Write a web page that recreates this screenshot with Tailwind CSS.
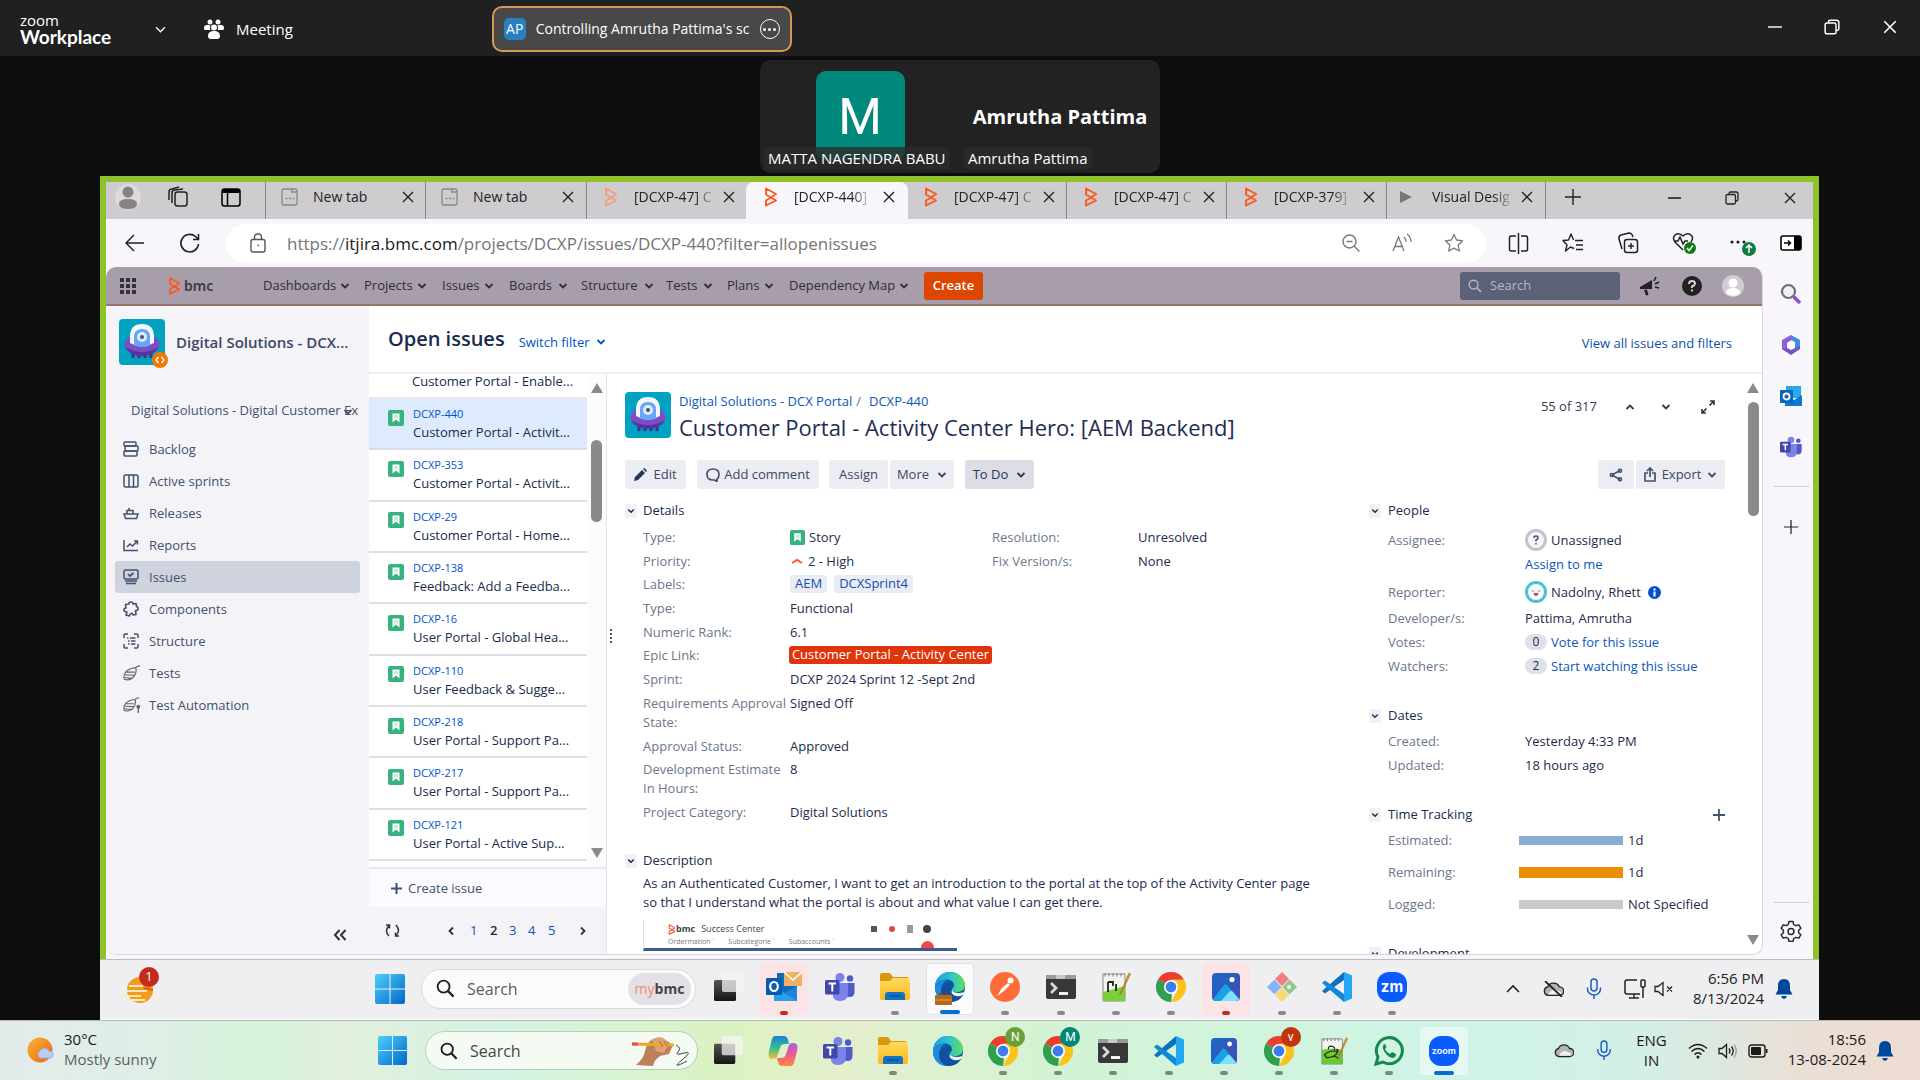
<!DOCTYPE html>
<html lang="en">
<head>
<meta charset="utf-8">
<title>Zoom Workplace</title>
<script src="https://cdn.jsdelivr.net/npm/@tailwindcss/browser@4"></script>
</head>
<body class="flex h-screen flex-col overflow-hidden bg-[#0d0d0d] font-['Open_Sans','Noto_Sans',sans-serif] text-[13px] leading-[19px] text-[#172b4d]">

<svg width="0" height="0" class="absolute" aria-hidden="true">
  <defs>
    <linearGradient id="gWin" x1="0" y1="0" x2="1" y2="1"><stop offset="0" stop-color="#4fd0fb"/><stop offset="1" stop-color="#0067c9"/></linearGradient>
    <linearGradient id="gFold" x1="0" y1="0" x2="0" y2="1"><stop offset="0" stop-color="#ffd95e"/><stop offset="1" stop-color="#fbb81f"/></linearGradient>
    <linearGradient id="gEdge" x1="0" y1="0" x2="1" y2="0"><stop offset="0" stop-color="#1b9de2"/><stop offset=".5" stop-color="#2bc3d2"/><stop offset="1" stop-color="#5fe05a"/></linearGradient>
    <linearGradient id="gSun" x1="0" y1="0" x2="1" y2="1"><stop offset="0" stop-color="#f7b733"/><stop offset="1" stop-color="#ef5f17"/></linearGradient>
    <linearGradient id="gPho" x1="0" y1="0" x2="1" y2="1"><stop offset="0" stop-color="#1669c9"/><stop offset="1" stop-color="#4a49b0"/></linearGradient>
    <linearGradient id="gCop" x1="0" y1="0" x2="0" y2="1"><stop offset="0" stop-color="#1b7fe0"/><stop offset=".5" stop-color="#2fbf8d"/><stop offset="1" stop-color="#f5c02e"/></linearGradient>
    <linearGradient id="gCop2" x1="0" y1="0" x2="0" y2="1"><stop offset="0" stop-color="#a35df2"/><stop offset=".5" stop-color="#ef5a8f"/><stop offset="1" stop-color="#fb8a3c"/></linearGradient>
    <linearGradient id="gTv" x1="0" y1="0" x2="0" y2="1"><stop offset="0" stop-color="#555"/><stop offset="1" stop-color="#151515"/></linearGradient>
  </defs>
  <symbol id="chev" viewBox="0 0 10 10"><path d="M1.500 3l3.500 3.500L8.500 3" fill="none" stroke="currentColor" stroke-width="1.800"/></symbol>
  <symbol id="x" viewBox="0 0 14 14"><path d="M2 2l10 10M12 2L2 12" fill="none" stroke="currentColor" stroke-width="1.400"/></symbol>
  <symbol id="plus" viewBox="0 0 18 18"><path d="M9 1v16M1 9h16" fill="none" stroke="currentColor" stroke-width="1.400"/></symbol>
  <symbol id="restore" viewBox="0 0 14 14"><rect x="1" y="3.500" width="9.500" height="9.500" rx="1.500" fill="none" stroke="currentColor" stroke-width="1.300"/><path d="M4 3.500V2.500Q4 1 5.500 1H11q2 0 2 2v5.500q0 1.500-1.500 1.500h-1" fill="none" stroke="currentColor" stroke-width="1.300"/></symbol>
  <symbol id="bmc" viewBox="0 0 14 20"><path d="M2 1.500L12 7 7 10.500 2 7.500zM7 10.500L12 13.500 2 18.500V13.500z" fill="none" stroke="currentColor" stroke-width="1.900" stroke-linejoin="round"/></symbol>
  <symbol id="ntab" viewBox="0 0 18 18"><path d="M3 1h7l1 3h5v11q0 2-2 2H3q-2 0-2-2V3q0-2 2-2zM10 1h4q2 0 2 2v1" fill="none" stroke="currentColor" stroke-width="1.300"/><path d="M4.500 10.500h2M8 10.500h2M11.500 10.500h2" stroke="currentColor" stroke-width="1.500"/></symbol>
  <symbol id="story" viewBox="0 0 16 16"><rect width="16" height="16" rx="2" fill="#36b37e"/><path d="M4.500 3.500h7v9L8 9.500l-3.500 3z" fill="#fff"/><path d="M6 5h4v4.500L8 8l-2 1.500z" fill="#36b37e" fill-opacity=".25"/></symbol>
  <symbol id="alien" viewBox="0 0 46 46"><rect width="46" height="46" rx="4" fill="#00a3bf"/><path d="M14 33v6M32 33v6M20 36v3M26 36v3" stroke="#403294" stroke-width="3"/><ellipse cx="23" cy="25.500" rx="17.500" ry="10.500" fill="#7a4fc4"/><path d="M6 28q17 10 34 0-5 9-17 9T6 28z" fill="#5a32a3"/><path d="M11 24V18Q11 5 23 5t12 13v6q-12 7-24 0z" fill="#f4f7ff"/><path d="M15 26V18q0-8 8-8t8 8v8q-8 4-16 0z" fill="#66a8f5"/><circle cx="23" cy="18" r="5" fill="#dcebff"/><circle cx="23" cy="18" r="2" fill="#42526e"/></symbol>
  <symbol id="mag" viewBox="0 0 20 20"><circle cx="8" cy="8" r="6.300" fill="none" stroke="currentColor" stroke-width="2"/><path d="M12.500 12.500L18.500 18.500" stroke="currentColor" stroke-width="2.400"/></symbol>
  <symbol id="win" viewBox="0 0 30 30"><path d="M0 2q0-2 2-2h12.500v14.500H0zM15.500 0H28q2 0 2 2v12.500H15.500zM0 15.500h14.500V30H2q-2 0-2-2zM15.500 15.500H30V28q0 2-2 2H15.500z" fill="url(#gWin)"/></symbol>
  <symbol id="tview" viewBox="0 0 30 30"><rect x="0" y="8" width="22" height="21" rx="1.500" fill="url(#gTv)"/><rect x="8" y="0" width="22" height="20" rx="2" fill="#f4f4f4" fill-opacity=".75"/></symbol>
  <symbol id="teams" viewBox="0 0 30 30"><circle cx="15" cy="5.500" r="4.500" fill="#7b83eb"/><circle cx="25" cy="6.500" r="3.200" fill="#5059c9"/><path d="M20 11h9.500v9q0 5-5 5T20 21z" fill="#5059c9"/><path d="M8 11h15v10q0 8-8 8T8 21z" fill="#7b83eb"/><rect y="8" width="14.500" height="14.500" rx="1.500" fill="#4048a8"/><path d="M3.500 11.500h7.500M7.300 11.500v8" stroke="#fff" stroke-width="2"/></symbol>
  <symbol id="folder" viewBox="0 0 30 30"><path d="M0 3q0-2 2-2h8l3 4h15v6H0z" fill="#d79a0c"/><path d="M0 9h10l3-3h15q2 0 2 2v18q0 2-2 2H2q-2 0-2-2z" fill="url(#gFold)"/><path d="M5 28v-5q0-3 3-3h14q3 0 3 3v5z" fill="#1272c4"/><path d="M9 24h12" stroke="#0b4f91" stroke-width="1.500"/></symbol>
  <symbol id="edge" viewBox="0 0 30 30"><circle cx="15" cy="15" r="15" fill="#0c59a4"/><path d="M0 15C0 6 7 0 15 0s15 6 15 13c0 5-4 7-8 7-3 0-5-1-5-2 0-2 2-2 2-5s-3-5.500-7-5.500C6 7.500 1 11 0 15z" fill="url(#gEdge)"/><path d="M12 7.500C5 8 0 12 0 16c0 8 6 14 14 14-5-2-8-6-8-12 0-4 2-8 6-10.500z" fill="#1b8ae0"/><path d="M16 13c-3 2-4 9 4 11 4 1 7-1 8.500-2-2 5-7 8-13.500 8C10 29 6 24 7 18c.5-4 4-7 8-7 3 0 4.500 2 1 2z" fill="#124f9e"/><path d="M17 18q1 3 7 3 3 0 4.500-1l.5 2q-3 3-8 2-6-2-4-6z" fill="#eef4f0"/></symbol>
  <symbol id="chrome" viewBox="0 0 30 30"><path d="M15 15L2 7.500A15 15 0 0 1 28 7.500z" fill="#ea3e31"/><path d="M15 15L2 7.500A15 15 0 0 0 15 30z" fill="#2fa04d"/><path d="M15 15V7.500h13A15 15 0 0 1 15 30l6-11z" fill="#fbc219"/><path d="M2 7.500L9 19q2 4 7 3.500L15 30" fill="#2fa04d"/><circle cx="15" cy="15" r="7" fill="#fff"/><circle cx="15" cy="15" r="5.400" fill="#3b7ded"/></symbol>
  <symbol id="postman" viewBox="0 0 30 30"><circle cx="15" cy="15" r="15" fill="#ff6c37"/><path d="M7 24l5-8 6-5 2 2-6 6z" fill="#fff"/><circle cx="20.500" cy="8.500" r="3" fill="#fff"/></symbol>
  <symbol id="term" viewBox="0 0 30 24"><rect width="30" height="24" rx="2" fill="#383838"/><path d="M0 4V2q0-2 2-2h26q2 0 2 2v2z" fill="#9a9a9a"/><path d="M10 0h9v4h-9z" fill="#c8c8c8"/><path d="M5 8l5 5-5 5" fill="none" stroke="#d9d9d9" stroke-width="2.800"/><path d="M13 18.500h9" stroke="#fff" stroke-width="2.800"/></symbol>
  <symbol id="npp" viewBox="0 0 30 30"><path d="M2 2h22v27H2z" fill="#f3f3f0" stroke="#888"/><path d="M2 14q11-3 22 0v15H2z" fill="#6cc832"/><path d="M4 1.500v3M8 1.500v3M12 1.500v3M16 1.500v3M20 1.500v3" stroke="#777"/><path d="M5 19q6-6 14-3-3 6-12 6zM9 13q0-4 4-3t2 4M17 14q3-2 2 2M15 20l5 3" stroke="#1d2a12" stroke-width="1.300" fill="none"/><path d="M28 1l1.500 1L20 22l-1.500 1z" fill="#e7a52c" stroke="#9c5a14" stroke-width=".6"/></symbol>
  <symbol id="nppf" viewBox="0 0 30 30"><path d="M2 2h22v27H2z" fill="#f3f3f0" stroke="#888"/><path d="M2 20l22-6v15H2z" fill="#7ad03a"/><path d="M4 1.500v3M8 1.500v3M12 1.500v3M16 1.500v3M20 1.500v3" stroke="#777"/><path d="M7 10v10M7 10h5v4M15 12v7" stroke="#222" stroke-width="1.800" fill="none"/><path d="M28 1l1.500 1L20 22l-1.500 1z" fill="#e7a52c" stroke="#9c5a14" stroke-width=".6"/></symbol>
  <symbol id="photos" viewBox="0 0 28 28"><rect width="28" height="28" rx="4" fill="url(#gPho)"/><circle cx="20" cy="6.500" r="2.600" fill="#fff"/><path d="M1 26L12 12q1.500-1.500 3 0l12 14q-1 2-3 2H4q-2 0-3-2z" fill="#1aa0e6"/><path d="M9 28l8-9q2-2 4 0l6 7q-1 2-3 2z" fill="#7fe0fb"/></symbol>
  <symbol id="vsc" viewBox="0 0 30 30"><path d="M22 0l8 3.500v23L22 30z" fill="#22a7f2"/><path d="M22 0v8L3 21.500l-3-2.500z" fill="#0a71bd"/><path d="M22 30v-8L3 8.500 0 11z" fill="#1288d6"/></symbol>
  <symbol id="git" viewBox="0 0 30 30"><path d="M15 0l7 7-7 7-7-7z" fill="#f27e7e"/><path d="M7.500 7.500l7 7.500-7 7.500L0 15z" fill="#86b4f2"/><path d="M22.500 7.500L30 15l-7.500 7.500-7-7.500z" fill="#8fca8a"/><path d="M15 15.500l7 7.500-7 7-7-7z" fill="#f5da72"/><circle cx="22" cy="15" r="2" fill="#fff"/></symbol>
  <symbol id="outlook" viewBox="0 0 36 30"><rect x="11" y="1" width="20" height="20" fill="#0f6cbd"/><path d="M8 14l12 8 11-8v15H8z" fill="#28a0ea"/><path d="M31 14v15L18 21z" fill="#1a86d8"/><rect y="6" width="16" height="17" rx="1" fill="#0a5cb0"/><ellipse cx="8" cy="14.500" rx="3.800" ry="4.500" fill="none" stroke="#fff" stroke-width="2.200"/><path d="M18 0h18v14H18z" fill="#efb168"/><path d="M18 0l9 8 9-8" fill="none" stroke="#fff" stroke-width="1.500"/></symbol>
  <symbol id="mic" viewBox="0 0 16 22"><rect x="5" y="1" width="6" height="12" rx="3" fill="none" stroke="#1c5fb8" stroke-width="1.500"/><path d="M1.500 9.500v1.500a6.500 6 0 0 0 13 0V9.500M8 17v4" fill="none" stroke="#1c5fb8" stroke-width="1.500"/></symbol>
  <symbol id="bell" viewBox="0 0 18 20"><path d="M9 0q6 0 6 7v4l2.500 4.500H.5L3 11V7q0-7 6-7zM6 17h6q-1 3-3 3t-3-3z" fill="#00489c"/></symbol>
  <symbol id="cloud" viewBox="0 0 20 14"><path d="M5 13a4 4 0 0 1-.500-7.900A6 6 0 0 1 15.500 5 4 4 0 0 1 16 13z" fill="#b4b4b4" stroke="#222" stroke-width="1.300"/><path d="M5 12.300q3.500-6.300 7.500-4.300l5 2q0 2.300-2 2.300z" fill="#f0f0f0"/></symbol>
  <symbol id="star" viewBox="0 0 20 20"><path d="M10 1.500l2.600 5.500 6 .8-4.400 4.200 1.100 6L10 15.100 4.700 18l1.100-6L1.400 7.800l6-.8z" fill="none" stroke="currentColor" stroke-width="1.300" stroke-linejoin="round"/></symbol>
  <symbol id="gear" viewBox="0 0 22 22"><path d="M9 1.500h4l.7 3 2.200 1.200 2.900-.9 2 3.400-2.200 2.100v2.400l2.200 2.100-2 3.400-2.900-.9-2.200 1.200-.7 3H9l-.7-3-2.200-1.200-2.900.9-2-3.400 2.200-2.100v-2.400L1.200 8.200l2-3.400 2.900.9 2.200-1.200z" fill="none" stroke="currentColor" stroke-width="1.400" stroke-linejoin="round"/><circle cx="11" cy="11.500" r="3" fill="none" stroke="currentColor" stroke-width="1.400"/></symbol>
  <symbol id="beetle" viewBox="0 0 20 18"><path d="M19 1q-3 0-5 2Q6 4 3 8t-1.500 8Q8 18 12 13t2-10M4 8l9 0M2.500 11l10 .5M2 14l8 1" fill="none" stroke="currentColor" stroke-width="1.300"/></symbol>
</svg>

<!-- Zoom title bar -->
<header class="flex h-14 shrink-0 items-center bg-[#202020] pt-[2px] text-white">
  <div class="flex w-[140px] flex-col pl-5">
    <span class="text-[15px] leading-4">zoom</span>
    <span class="font-['Lato','Open_Sans',sans-serif] text-[19px] leading-[18px] font-bold">Workplace</span>
  </div>
  <button class="ml-3 flex h-8 w-4 items-center justify-center" aria-label="Products"><svg class="size-[11px]" viewBox="0 0 10 10"><path d="M1 3l4 4 4-4" fill="none" stroke="#fff" stroke-width="1.200"/></svg></button>
  <button class="ml-9 flex items-center gap-3 text-[15px]">
    <svg class="size-5" viewBox="0 0 20 20" fill="#fff"><circle cx="6" cy="3" r="2.500"/><circle cx="14" cy="3" r="2.500"/><circle cx="10" cy="8.500" r="3"/><path d="M0 9q0-3 3-3h2q1 0 1.500 1Q5 9 6.500 11H1Q0 11 0 9zM20 9q0-3-3-3h-2q-1 0-1.500 1Q15 9 13.500 11H19q1 0 1-2zM4 17q0-5 6-5t6 5q0 3-3 3H7q-3 0-3-3z"/></svg>
    Meeting
  </button>
  <div class="ml-[199px] flex h-[46px] w-[300px] items-center rounded-[10px] border-2 border-[#d29a55] bg-[#484848] px-2.5">
    <span class="flex h-[22px] w-[22px] items-center justify-center rounded-[5px] bg-[#2680c0] text-sm">AP</span>
    <span class="ml-2.5 w-[218px] overflow-hidden text-sm whitespace-nowrap">Controlling Amrutha Pattima's sc</span>
    <button class="ml-2 flex size-5 items-center justify-center gap-[2px] rounded-full border border-white" aria-label="More"><i class="size-[3px] rounded-full bg-white"></i><i class="size-[3px] rounded-full bg-white"></i><i class="size-[3px] rounded-full bg-white"></i></button>
  </div>
  <div class="ml-auto flex items-center gap-[42px] pr-[22px] pb-1">
    <button aria-label="Minimize" class="h-[2px] w-[14px] bg-[#bbb]"></button>
    <button aria-label="Restore"><svg class="size-4"><use href="#restore"/></svg></button>
    <button aria-label="Close"><svg class="size-4"><use href="#x"/></svg></button>
  </div>
</header>

<!-- Participants -->
<section class="mx-auto mt-1 mb-[3px] flex h-[113px] w-[400px] shrink-0 rounded-[10px] bg-[#222] text-white">
  <div class="relative w-[200px] overflow-hidden">
    <div class="mx-auto mt-[11px] flex h-[89px] w-[89px] items-center justify-center rounded-[10px] bg-[#00897b] pt-1 font-[Roboto,sans-serif] text-[50px]">M</div>
    <span class="absolute bottom-[3px] left-1 rounded-md bg-[#2c2c2c]/80 px-1 py-[2px] text-[15px] whitespace-nowrap">MATTA NAGENDRA BABU</span>
  </div>
  <div class="relative flex w-[200px] justify-center pt-[43px]">
    <span class="text-xl leading-7 font-bold whitespace-nowrap">Amrutha Pattima</span>
    <span class="absolute bottom-[3px] left-1 rounded-md bg-[#2c2c2c]/80 px-1 py-[2px] text-[15px] whitespace-nowrap">Amrutha Pattima</span>
  </div>
</section>

<!-- Shared screen -->
<main class="mr-[101px] ml-[100px] flex min-h-0 flex-1 flex-col">
  <div class="flex min-h-0 flex-1 flex-col border-x-[6px] border-t-[6px] border-[#8ec12a] bg-[#f8f6fa]">

    <!-- Tab strip -->
    <div class="flex h-[37px] shrink-0 items-stretch bg-[#cfccd0] text-[#222]">
      <div class="flex w-[159px] shrink-0 items-center border-r border-[#cfccd0] pl-2 pb-2">
        <svg class="size-7" viewBox="0 0 28 28"><circle cx="14" cy="14" r="13" fill="#dcdadc"/><circle cx="14" cy="9" r="5.500" fill="#85827f"/><path d="M5 21q0-5 9-5t9 5-9 5-9-5z" fill="#85827f"/></svg>
        <svg class="ml-[25px] size-[22px]" viewBox="0 0 22 22" fill="none" stroke="#222" stroke-width="1.500"><rect x="8" y="6" width="12" height="14" rx="2.500"/><path d="M5 17V7q0-3 3-3l8-1M2 14V6q0-3 3-3l7-2"/></svg>
        <svg class="ml-8 size-5" viewBox="0 0 20 20" fill="none" stroke="#000" stroke-width="1.500"><rect x="1" y="2" width="18" height="17" rx="2.500"/><path d="M1 4h18" stroke-width="4"/><path d="M6.500 5v14"/></svg>
      </div>
      <div class="flex w-40 items-center border-l border-[#8a878a] pb-2 pl-[15px]"><svg class="size-[18px] shrink-0 text-[#888]"><use href="#ntab"/></svg><a href="#" class="ml-[14px] w-[82px] overflow-hidden text-sm whitespace-nowrap">New tab</a><button class="ml-1.5" aria-label="Close tab"><svg class="size-[14px]"><use href="#x"/></svg></button></div>
      <div class="flex w-[161px] items-center border-l border-[#8a878a] pb-2 pl-[15px]"><svg class="size-[18px] shrink-0 text-[#888]"><use href="#ntab"/></svg><a href="#" class="ml-[14px] w-[82px] overflow-hidden text-sm whitespace-nowrap">New tab</a><button class="ml-1.5" aria-label="Close tab"><svg class="size-[14px]"><use href="#x"/></svg></button></div>
      <div class="flex w-40 items-center rounded-br-lg border-l border-[#8a878a] pb-2 pl-[15px]"><svg class="h-5 w-[18px] shrink-0 text-[#f0a07c]"><use href="#bmc"/></svg><a href="#" class="ml-[14px] w-[82px] overflow-hidden [mask-image:linear-gradient(to_right,black_75%,transparent)] text-sm whitespace-nowrap">[DCXP-47] C</a><button class="ml-1.5" aria-label="Close tab"><svg class="size-[14px]"><use href="#x"/></svg></button></div>
      <div class="flex w-[162px] items-center rounded-t-lg bg-[#f8f6fa] pb-2 pl-4"><svg class="h-5 w-[18px] shrink-0 text-[#fa5a1e]"><use href="#bmc"/></svg><a href="#" class="ml-[14px] w-[78px] overflow-hidden [mask-image:linear-gradient(to_right,black_75%,transparent)] text-sm whitespace-nowrap">[DCXP-440]</a><button class="ml-2.5" aria-label="Close tab"><svg class="size-[14px]"><use href="#x"/></svg></button></div>
      <div class="flex w-[158px] items-center rounded-bl-lg pb-2 pl-[14px]"><svg class="h-5 w-[18px] shrink-0 text-[#fa5a1e]"><use href="#bmc"/></svg><a href="#" class="ml-[14px] w-[82px] overflow-hidden [mask-image:linear-gradient(to_right,black_75%,transparent)] text-sm whitespace-nowrap">[DCXP-47] C</a><button class="ml-1.5" aria-label="Close tab"><svg class="size-[14px]"><use href="#x"/></svg></button></div>
      <div class="flex w-40 items-center border-l border-[#8a878a] pb-2 pl-[15px]"><svg class="h-5 w-[18px] shrink-0 text-[#fa5a1e]"><use href="#bmc"/></svg><a href="#" class="ml-[14px] w-[82px] overflow-hidden [mask-image:linear-gradient(to_right,black_75%,transparent)] text-sm whitespace-nowrap">[DCXP-47] C</a><button class="ml-1.5" aria-label="Close tab"><svg class="size-[14px]"><use href="#x"/></svg></button></div>
      <div class="flex w-40 items-center border-l border-[#8a878a] pb-2 pl-[15px]"><svg class="h-5 w-[18px] shrink-0 text-[#fa5a1e]"><use href="#bmc"/></svg><a href="#" class="ml-[14px] w-[78px] overflow-hidden [mask-image:linear-gradient(to_right,black_75%,transparent)] text-sm whitespace-nowrap">[DCXP-379]</a><button class="ml-2.5" aria-label="Close tab"><svg class="size-[14px]"><use href="#x"/></svg></button></div>
      <div class="flex w-40 items-center border-x border-[#8a878a] pb-2 pl-[13px]"><svg class="size-[14px] shrink-0" viewBox="0 0 14 14"><path d="M0 1l12 6-12 6z" fill="#777"/></svg><a href="#" class="ml-[18px] w-[82px] overflow-hidden [mask-image:linear-gradient(to_right,black_75%,transparent)] text-sm whitespace-nowrap">Visual Desig</a><button class="ml-1.5" aria-label="Close tab"><svg class="size-[14px]"><use href="#x"/></svg></button></div>
      <button class="ml-[18px] pb-2" aria-label="New tab"><svg class="size-[18px]"><use href="#plus"/></svg></button>
      <div class="ml-auto flex items-center gap-11 pr-4 pb-1.5">
        <button aria-label="Minimize" class="h-[2px] w-[13px] bg-[#444]"></button>
        <button aria-label="Restore"><svg class="size-[14px]"><use href="#restore"/></svg></button>
        <button aria-label="Close"><svg class="size-[14px]"><use href="#x"/></svg></button>
      </div>
    </div>

    <!-- Address bar -->
    <div class="flex h-12 shrink-0 items-center text-[#222]">
      <button aria-label="Back" class="ml-[19px]"><svg class="size-5" viewBox="0 0 20 20" fill="none" stroke="#222" stroke-width="1.500"><path d="M19 10H1M9 2L1 10l8 8"/></svg></button>
      <button aria-label="Reload" class="ml-[34px]"><svg class="size-[22px]" viewBox="0 0 22 22" fill="none" stroke="#222" stroke-width="1.600"><path d="M19.500 12A8.800 8.800 0 1 1 16.500 4.500L19 7M19.500 2v5.500H14"/></svg></button>
      <div class="ml-[25px] flex h-[38px] flex-1 items-center rounded-full bg-white pr-[22px] pl-6">
        <svg class="h-5 w-4" viewBox="0 0 16 20" fill="none" stroke="#555" stroke-width="1.400"><rect x="1" y="6.500" width="14" height="12.500" rx="2"/><path d="M4.500 6.500V4q0-3 3.500-3t3.500 3v2.500M7.500 12.500h1.500"/></svg>
        <div role="textbox" aria-label="Address" contenteditable="true" class="ml-[21px] flex-1 text-[17px] whitespace-nowrap text-[#757575]">https://<span class="text-[#1a1a1a]">itjira.bmc.com</span>/projects/DCXP/issues/DCXP-440?filter=allopenissues</div>
        <div class="flex items-center gap-8 text-[#777]">
          <svg class="size-[18px]" viewBox="0 0 18 18" fill="none" stroke="currentColor" stroke-width="1.400"><circle cx="7.500" cy="7.500" r="6.500"/><path d="M12 12l5.500 5.500M4.500 7.500h6"/></svg>
          <svg class="size-5" viewBox="0 0 20 20" fill="none" stroke="currentColor" stroke-width="1.300"><path d="M1 18L6.500 4 12 18M3 13.500h7M12 4q2 2 2 5M15 1q4 3 4 8"/></svg>
          <svg class="size-5"><use href="#star"/></svg>
        </div>
      </div>
      <div class="flex items-center gap-[33px] pr-[11px] pl-[22px]">
        <svg class="size-[21px]" viewBox="0 0 21 21" fill="none" stroke="#222" stroke-width="1.500"><path d="M8 3H3Q1.500 3 1.500 5v11q0 2 1.500 2h5M13 3h5q1.500 0 1.500 2v11q0 2-1.500 2h-5M10.500 0v21"/></svg>
        <svg class="size-[22px]" viewBox="0 0 22 22" fill="none" stroke="#222" stroke-width="1.400" stroke-linejoin="round"><path d="M12 16.500L8.500 15l-5 4L5 13 1 8.500 6.500 8 9 2l2.500 6M13 8.500h8M14 13h7M14 17.500h7"/></svg>
        <svg class="size-[22px]" viewBox="0 0 22 22" fill="none" stroke="#222" stroke-width="1.500"><rect x="7.500" y="7.500" width="13" height="13" rx="2.500"/><path d="M14 11v6M11 14h6M5 17L2 7q-.5-3 2-4l8-2q3 0 4 4"/></svg>
        <svg class="size-6" viewBox="0 0 24 24" fill="none" stroke="#222" stroke-width="1.500"><path d="M11 19L3 11Q0 7 3 4q4-3 8 1 4-4 8-1 3 3 0 7M2 10h4l2-4 3 7 2-3h3"/><circle cx="18" cy="17" r="6" fill="#107c10" stroke="none"/><path d="M15 17l2 2.500 4-5" stroke="#fff"/></svg>
        <svg class="h-7 w-7" viewBox="0 0 28 28"><circle cx="3" cy="13" r="1.600" fill="#222"/><circle cx="9" cy="13" r="1.600" fill="#222"/><circle cx="15" cy="13" r="1.600" fill="#222"/><circle cx="20" cy="20" r="7" fill="#107c41"/><path d="M20 24v-8M17 19l3-3 3 3" stroke="#fff" stroke-width="1.500" fill="none"/></svg>
        <svg class="-ml-2.5 h-4 w-[22px]" viewBox="0 0 22 16"><rect x="1" y="1" width="20" height="14" rx="2" fill="#fff" stroke="#000" stroke-width="1.600"/><path d="M14 1h5q2 0 2 2v10q0 2-2 2h-5z"/><path d="M4 8h6M8 5.500L10.500 8 8 10.500" stroke="#000" stroke-width="1.500" fill="none"/></svg>
      </div>
    </div>

    <div class="flex min-h-0 flex-1">
      <!-- Web page -->
      <div class="mb-1 flex min-w-0 flex-1 flex-col overflow-hidden rounded-t-[10px] rounded-b-[10px] border-r border-b border-[#d8d6da] bg-white">

        <!-- Jira navigation -->
        <nav class="flex h-[39px] shrink-0 items-center border-b-2 border-[#9a7468] bg-[#a89eab] text-[#2f2c3c]">
          <svg class="ml-[14px] size-4" viewBox="0 0 16 16" fill="#333"><path d="M0 0h4v4H0zM6 0h4v4H6zM12 0h4v4h-4zM0 6h4v4H0zM6 6h4v4H6zM12 6h4v4h-4zM0 12h4v4H0zM6 12h4v4H6zM12 12h4v4h-4z"/></svg>
          <a href="#" class="ml-8 flex w-[95px] items-center gap-[3px] font-['Noto_Sans',sans-serif] text-sm font-semibold text-[#3c3a40]"><svg class="h-5 w-[13px] text-[#fa5a1e]"><use href="#bmc"/></svg>bmc</a>
          <button class="flex w-[101px] items-center gap-1">Dashboards<svg class="size-[10px]"><use href="#chev"/></svg></button>
          <button class="flex w-[78px] items-center gap-1">Projects<svg class="size-[10px]"><use href="#chev"/></svg></button>
          <button class="flex w-[67px] items-center gap-1">Issues<svg class="size-[10px]"><use href="#chev"/></svg></button>
          <button class="flex w-[72px] items-center gap-1.5">Boards<svg class="size-[10px]"><use href="#chev"/></svg></button>
          <button class="flex w-[85px] items-center gap-1.5">Structure<svg class="size-[10px]"><use href="#chev"/></svg></button>
          <button class="flex w-[61px] items-center gap-1.5">Tests<svg class="size-[10px]"><use href="#chev"/></svg></button>
          <button class="flex w-[62px] items-center gap-1">Plans<svg class="size-[10px]"><use href="#chev"/></svg></button>
          <button class="flex w-[135px] items-center gap-1">Dependency Map<svg class="size-[10px]"><use href="#chev"/></svg></button>
          <button class="h-7 w-[59px] rounded-[3px] bg-[#dd4600] text-[13px] font-semibold text-white">Create</button>
          <label class="ml-auto flex h-7 w-40 items-center rounded-[3px] bg-[#5c6178] pl-2 text-[#b6b6c6]"><svg class="size-[14px] shrink-0"><use href="#mag"/></svg><input aria-label="Search Jira" placeholder="Search" class="ml-2 w-24 bg-transparent placeholder-[#b6b6c6] outline-none"></label>
          <svg class="ml-5 size-5" viewBox="0 0 20 20" fill="#222"><path d="M0 11L12 4v9L0 13zM4 14l3-.5 1.500 5.500-2.500.5z"/><path d="M14 5l2-4M15 8l4-2M15 11l4 1" stroke="#222" stroke-width="1.600"/></svg>
          <svg class="ml-[22px] size-5" viewBox="0 0 20 20"><circle cx="10" cy="10" r="10" fill="#222"/><path d="M7 8q0-3 3-3t3 2.500q0 1.500-3 3V12M10 13.500v2" fill="none" stroke="#d5cfd8" stroke-width="2"/></svg>
          <svg class="mr-[18px] ml-5 size-[22px]" viewBox="0 0 22 22"><circle cx="11" cy="11" r="11" fill="#cfccd3"/><circle cx="11" cy="8" r="4.500" fill="#fff"/><path d="M3.500 18q1-5 7.500-5t7.500 5Q15 21 11 21t-7.500-3z" fill="#fff"/></svg>
        </nav>

        <div class="flex min-h-0 flex-1">
          <!-- Project sidebar -->
          <aside class="flex w-[263px] shrink-0 flex-col bg-[#f4f3f8] text-[#42526e]">
            <div class="flex items-center pt-[13px] pl-[13px]">
              <div class="relative"><svg class="size-[46px]"><use href="#alien"/></svg>
                <svg class="absolute -right-[3px] -bottom-[3px] size-4" viewBox="0 0 16 16"><circle cx="8" cy="8" r="8" fill="#f07800"/><path d="M6.500 5L4 8l2.500 3M9.500 5L12 8l-2.500 3" fill="none" stroke="#fff" stroke-width="1.300"/></svg></div>
              <span class="ml-[11px] text-[15px] font-semibold whitespace-nowrap text-[#3b4863]">Digital Solutions - DCX...</span>
            </div>
            <button class="relative mt-9 ml-[25px] w-[228px] overflow-hidden text-left whitespace-nowrap">Digital Solutions - Digital Customer Exp<svg class="absolute top-1.5 right-1.5 size-[10px]"><use href="#chev"/></svg></button>
            <ul class="mt-[13px] flex flex-col px-[9px]">
              <li><a href="#" class="flex h-8 items-center gap-[10px] pl-2"><svg class="size-4" viewBox="0 0 16 16" fill="none" stroke="currentColor" stroke-width="1.500"><rect x="1" y="1" width="12" height="4" rx="1"/><rect x="2" y="5" width="13" height="5" rx="1"/><rect x="1" y="10" width="13" height="5" rx="1"/></svg>Backlog</a></li>
              <li><a href="#" class="flex h-8 items-center gap-[10px] pl-2"><svg class="size-4" viewBox="0 0 16 16" fill="none" stroke="currentColor" stroke-width="1.500"><rect x="1" y="2" width="14" height="12" rx="1.500"/><path d="M6 2v12M10.500 2v12"/></svg>Active sprints</a></li>
              <li><a href="#" class="flex h-8 items-center gap-[10px] pl-2"><svg class="size-4" viewBox="0 0 16 16" fill="none" stroke="currentColor" stroke-width="1.500"><path d="M1 9h14l-1.500 4.500h-11zM4 9V5.500h6V9M6 5.500V3"/></svg>Releases</a></li>
              <li><a href="#" class="flex h-8 items-center gap-[10px] pl-2"><svg class="size-4" viewBox="0 0 16 16" fill="none" stroke="currentColor" stroke-width="1.500"><path d="M1 3v10.500h14M4 10l3-3 2.500 2L14 4.500M11 4h3.500v3.500"/></svg>Reports</a></li>
              <li><a href="#" class="flex h-8 items-center gap-[10px] rounded-[3px] bg-[#cfd3de] pl-2 font-medium"><svg class="size-4" viewBox="0 0 16 16" fill="none" stroke="currentColor" stroke-width="1.500"><rect x="1" y="1" width="14" height="9" rx="1.500"/><path d="M5 5l2 2 3.500-3M2 12h12M3 14.500h10" stroke-width="1.700"/></svg>Issues</a></li>
              <li><a href="#" class="flex h-8 items-center gap-[10px] pl-2"><svg class="size-4" viewBox="0 0 16 16" fill="none" stroke="currentColor" stroke-width="1.600" stroke-linejoin="round"><path d="M6 3q0-2 2-2t2 2l3-.5.5 3q2 .5 1.500 2.500t-2.500 1.500l.5 4-3 .5q-.5-2-2-1.500T6.500 15L3 14l1-3Q1 11 1 9t2-2l-.5-3.500z"/></svg>Components</a></li>
              <li><a href="#" class="flex h-8 items-center gap-[10px] pl-2"><svg class="size-4" viewBox="0 0 16 16" fill="none" stroke="currentColor" stroke-width="1.500"><path d="M5 1H2Q1 1 1 2v3M11 1h3q1 0 1 1v3M5 15H2q-1 0-1-1v-3M11 15h3q1 0 1-1v-3M4 5h1.500M7 5h5.500M5 8h1.500M8 8h4.500M5 11h1.500M8 11h4.500"/></svg>Structure</a></li>
              <li><a href="#" class="flex h-8 items-center gap-2 pl-2"><svg class="size-[18px] text-[#666]"><use href="#beetle"/></svg>Tests</a></li>
              <li><a href="#" class="flex h-8 items-center gap-2 pl-2"><svg class="size-[18px] text-[#666]" viewBox="0 0 20 18"><use href="#beetle" width="19" height="17"/><path d="M17 12v6" stroke="currentColor" stroke-width="1.500"/><circle cx="17" cy="11" r="2.200" fill="currentColor"/></svg>Test Automation</a></li>
            </ul>
            <button class="mt-auto mb-[13px] ml-[227px] flex w-[14px]" aria-label="Collapse sidebar"><svg class="h-3 w-[14px]" viewBox="0 0 14 12" fill="none" stroke="#333" stroke-width="2"><path d="M6.500 1L2 6l4.500 5M12.500 1L8 6l4.500 5"/></svg></button>
          </aside>

          <div class="flex min-w-0 flex-1 flex-col">
            <div class="flex h-[68px] shrink-0 items-center border-b-2 border-[#f0eff4] pr-[30px] pl-[19px]">
              <h1 class="text-xl font-semibold whitespace-nowrap">Open issues</h1>
              <a href="#" class="mt-1.5 ml-[14px] flex items-center gap-1.5 whitespace-nowrap text-[#0052cc]">Switch filter<svg class="size-[10px]"><use href="#chev"/></svg></a>
              <a href="#" class="mt-2 ml-auto whitespace-nowrap text-[#0f4fa8]">View all issues and filters</a>
            </div>

            <div class="flex min-h-0 flex-1">
              <!-- Issue list -->
              <div class="flex w-[238px] shrink-0 flex-col border-r border-[#e6e5ec]">
                <div class="flex min-h-0 flex-1">
                  <ol class="flex min-w-0 flex-1 flex-col pb-[6px]">
                    <li class="h-[25px] shrink-0 overflow-hidden border-b-2 border-[#e8e7ec] pl-[43px] leading-[15px] whitespace-nowrap">Customer Portal - Enable...</li>
                    <li class="flex flex-1 items-center gap-[9px] border-b-2 border-[#d9dbe6] bg-[#deebff] pl-[19px] whitespace-nowrap"><svg class="mb-3 size-4 shrink-0"><use href="#story"/></svg><div><a href="#" class="block text-[11px] leading-[18px] text-[#0052cc]">DCXP-440</a>Customer Portal - Activit...</div></li>
                    <li class="flex flex-1 items-center gap-[9px] border-b-2 border-[#e0dfe3] pl-[19px] whitespace-nowrap"><svg class="mb-3 size-4 shrink-0"><use href="#story"/></svg><div><a href="#" class="block text-[11px] leading-[18px] text-[#0052cc]">DCXP-353</a>Customer Portal - Activit...</div></li>
                    <li class="flex flex-1 items-center gap-[9px] border-b-2 border-[#e0dfe3] pl-[19px] whitespace-nowrap"><svg class="mb-3 size-4 shrink-0"><use href="#story"/></svg><div><a href="#" class="block text-[11px] leading-[18px] text-[#0052cc]">DCXP-29</a>Customer Portal - Home...</div></li>
                    <li class="flex flex-1 items-center gap-[9px] border-b-2 border-[#e0dfe3] pl-[19px] whitespace-nowrap"><svg class="mb-3 size-4 shrink-0"><use href="#story"/></svg><div><a href="#" class="block text-[11px] leading-[18px] text-[#0052cc]">DCXP-138</a>Feedback: Add a Feedba...</div></li>
                    <li class="flex flex-1 items-center gap-[9px] border-b-2 border-[#e0dfe3] pl-[19px] whitespace-nowrap"><svg class="mb-3 size-4 shrink-0"><use href="#story"/></svg><div><a href="#" class="block text-[11px] leading-[18px] text-[#0052cc]">DCXP-16</a>User Portal - Global Hea...</div></li>
                    <li class="flex flex-1 items-center gap-[9px] border-b-2 border-[#e0dfe3] pl-[19px] whitespace-nowrap"><svg class="mb-3 size-4 shrink-0"><use href="#story"/></svg><div><a href="#" class="block text-[11px] leading-[18px] text-[#0052cc]">DCXP-110</a>User Feedback &amp; Sugge...</div></li>
                    <li class="flex flex-1 items-center gap-[9px] border-b-2 border-[#e0dfe3] pl-[19px] whitespace-nowrap"><svg class="mb-3 size-4 shrink-0"><use href="#story"/></svg><div><a href="#" class="block text-[11px] leading-[18px] text-[#0052cc]">DCXP-218</a>User Portal - Support Pa...</div></li>
                    <li class="flex flex-1 items-center gap-[9px] border-b-2 border-[#e0dfe3] pl-[19px] whitespace-nowrap"><svg class="mb-3 size-4 shrink-0"><use href="#story"/></svg><div><a href="#" class="block text-[11px] leading-[18px] text-[#0052cc]">DCXP-217</a>User Portal - Support Pa...</div></li>
                    <li class="flex flex-1 items-center gap-[9px] border-b-2 border-[#e0dfe3] pl-[19px] whitespace-nowrap"><svg class="mb-3 size-4 shrink-0"><use href="#story"/></svg><div><a href="#" class="block text-[11px] leading-[18px] text-[#0052cc]">DCXP-121</a>User Portal - Active Sup...</div></li>
                  </ol>
                  <div class="flex w-[19px] flex-col items-center bg-[#fcfcfe] pt-[9px] pb-[9px]">
                    <svg class="h-[10px] w-3" viewBox="0 0 12 10"><path d="M6 0l6 10H0z" fill="#8a8a8a"/></svg>
                    <div class="mt-[47px] h-[82px] w-[11px] rounded-full bg-[#8a8a8a]"></div>
                    <svg class="mt-auto h-[10px] w-3" viewBox="0 0 12 10"><path d="M6 10l6-10H0z" fill="#8a8a8a"/></svg>
                  </div>
                </div>
                <button class="flex h-10 items-center gap-1.5 border-t-2 border-[#e9e8ee] bg-[#fafaff] pl-[22px] text-[#42526e]"><svg class="size-[11px]" viewBox="0 0 11 11"><path d="M5.500 0v11M0 5.500h11" stroke="#42526e" stroke-width="2"/></svg>Create issue</button>
                <div class="flex h-[47px] items-center bg-[#f4f3f8] pl-4 text-[13px] text-[#0b57b8]">
                  <svg class="size-[15px]" viewBox="0 0 15 15" fill="none" stroke="#333" stroke-width="1.500"><path d="M1 2h3.500v3.500M4 2.500Q1.500 5 1.500 8t2.500 5M14 13h-3.500V9.500M11 12.500q2.500-2.500 2.500-5T11 2"/></svg>
                  <button aria-label="Previous page" class="ml-[46px] text-[#333]"><svg class="size-[10px] rotate-90"><use href="#chev"/></svg></button>
                  <a href="#" class="ml-3.5 w-[20px]">1</a><a href="#" class="w-[19px] font-semibold text-[#172b4d]">2</a><a href="#" class="w-[19px]">3</a><a href="#" class="w-5">4</a><a href="#" class="w-[30px]">5</a>
                  <button aria-label="Next page" class="text-[#333]"><svg class="size-[10px] -rotate-90"><use href="#chev"/></svg></button>
                </div>
              </div>

              <!-- Issue detail -->
              <div class="flex w-[18px] shrink-0 items-start pt-[255px] pl-[2px]"><svg class="h-4 w-1" viewBox="0 0 4 16"><path d="M1 1h2M1 5h2M1 9h2M1 13h2" stroke="#555" stroke-width="2"/></svg></div>
              <article class="flex min-w-0 flex-1 flex-col">
                <div class="mt-[18px] flex shrink-0 items-start">
                  <svg class="size-[46px] shrink-0"><use href="#alien"/></svg>
                  <div class="ml-2">
                    <div class="whitespace-nowrap text-[#0b57b8]"><a href="#">Digital Solutions - DCX Portal</a><span class="px-1 text-[#6b778c]">/</span><a href="#" class="ml-1">DCXP-440</a></div>
                    <h2 class="text-[22px] leading-8 font-medium whitespace-nowrap text-[#1f2d52]">Customer Portal - Activity Center Hero: [AEM Backend]</h2>
                  </div>
                  <div class="mt-[5px] mr-[47px] ml-auto flex items-center text-[#333c55]">
                    <span class="whitespace-nowrap">55 of 317</span>
                    <button aria-label="Previous" class="ml-7"><svg class="size-[10px] rotate-180"><use href="#chev"/></svg></button>
                    <button aria-label="Next" class="ml-[26px]"><svg class="size-[10px]"><use href="#chev"/></svg></button>
                    <button aria-label="Expand" class="ml-[30px]"><svg class="size-[14px]" viewBox="0 0 14 14" fill="none" stroke="#333" stroke-width="1.600"><path d="M8.500 5.500L13 1M9 1h4v4M5.500 8.500L1 13M1 9v4h4"/></svg></button>
                  </div>
                </div>
                <div class="mt-[17px] flex h-[29px] shrink-0 items-stretch pr-[17px] text-[#3a4763]">
                  <button class="flex w-[61px] items-center justify-center gap-1.5 rounded-[3px] bg-[#ecedf3]"><svg class="size-[13px]" viewBox="0 0 13 13" fill="#253858"><path d="M0 13l1-4 7-7 3 3-7 7zM9 1l1-1q1 0 3 3l-1 1z"/></svg>Edit</button>
                  <button class="ml-[11px] flex w-[122px] items-center justify-center gap-1 rounded-[3px] bg-[#ecedf3] whitespace-nowrap"><svg class="size-[14px]" viewBox="0 0 14 14" fill="none" stroke="#42526e" stroke-width="1.700"><path d="M7 12Q1 12 1 6.500T7 1t6 5.500q0 3-2 4.500v2.500L8.500 12z"/></svg>Add comment</button>
                  <button class="ml-2.5 w-[59px] rounded-[3px] bg-[#ecedf3]">Assign</button>
                  <button class="ml-[2px] flex w-16 items-center justify-center gap-2 rounded-[3px] bg-[#ecedf3]">More<svg class="size-[10px]"><use href="#chev"/></svg></button>
                  <button class="ml-[11px] flex w-[69px] items-center justify-center gap-2 rounded-[3px] bg-[#dddde6] font-medium whitespace-nowrap text-[#253858]">To Do<svg class="size-[10px]"><use href="#chev"/></svg></button>
                  <button aria-label="Share" class="ml-auto flex w-9 items-center justify-center rounded-[3px] bg-[#ecedf3]"><svg class="size-[14px]" viewBox="0 0 14 14" fill="none" stroke="#42526e" stroke-width="1.600"><path d="M3 7l8-4.500M3 7l8 4.500"/><circle cx="2.800" cy="7" r="1.500"/><circle cx="11" cy="2.800" r="1.500"/><circle cx="11" cy="11.200" r="1.500"/></svg></button>
                  <button class="mr-5 ml-[2px] flex w-[89px] items-center justify-center gap-1.5 rounded-[3px] bg-[#ecedf3]"><svg class="h-[15px] w-3" viewBox="0 0 12 15" fill="none" stroke="#42526e" stroke-width="1.700"><path d="M4 6H1v8h10V6H8M6 10V1.500M3 4l3-3 3 3"/></svg>Export<svg class="size-[10px]"><use href="#chev"/></svg></button>
                </div>
                <div class="mt-3 flex min-h-0 flex-1 overflow-hidden">
                  <div class="flex min-w-0 flex-1 flex-col">
                    <h3 class="flex shrink-0 items-center gap-1.5 font-medium"><span class="flex h-[14px] w-3 items-center justify-center bg-[#f1f1f5]"><svg class="size-2"><use href="#chev"/></svg></span>Details</h3>
                    <div class="mt-2 flex shrink-0 pl-[18px] text-[#1d2b4d]">
                      <dl class="flex h-[294px] w-[349px] flex-col justify-between whitespace-nowrap">
                        <div class="flex"><dt class="w-[147px] text-[#6b778c]">Type:</dt><dd class="flex items-center gap-1"><svg class="size-[15px]"><use href="#story"/></svg>Story</dd></div>
                        <div class="flex"><dt class="w-[147px] text-[#6b778c]">Priority:</dt><dd class="flex items-center gap-1"><svg class="size-[14px]" viewBox="0 0 14 14"><path d="M2 9l5-3 5 3" fill="none" stroke="#ff5630" stroke-width="2"/></svg>2 - High</dd></div>
                        <div class="flex"><dt class="w-[147px] text-[#6b778c]">Labels:</dt><dd class="flex h-[19px] gap-[7px] text-[#0b4fae]"><a href="#" class="h-[18px] rounded-[3px] bg-[#ebecf3] px-[5px] leading-[17px]">AEM</a><a href="#" class="h-[18px] rounded-[3px] bg-[#ebecf3] px-[5px] leading-[17px]">DCXSprint4</a></dd></div>
                        <div class="flex"><dt class="w-[147px] text-[#6b778c]">Type:</dt><dd>Functional</dd></div>
                        <div class="flex"><dt class="w-[147px] text-[#6b778c]">Numeric Rank:</dt><dd>6.1</dd></div>
                        <div class="flex"><dt class="w-[147px] text-[#6b778c]">Epic Link:</dt><dd class="h-[19px]"><a href="#" class="block h-[18px] w-[203px] rounded-[3px] bg-[#de350b] text-center leading-[17px] text-white">Customer Portal - Activity Center</a></dd></div>
                        <div class="flex"><dt class="w-[147px] text-[#6b778c]">Sprint:</dt><dd>DCXP 2024 Sprint 12 -Sept 2nd</dd></div>
                        <div class="flex"><dt class="w-[147px] text-[#6b778c]">Requirements Approval<br>State:</dt><dd>Signed Off</dd></div>
                        <div class="flex"><dt class="w-[147px] text-[#6b778c]">Approval Status:</dt><dd>Approved</dd></div>
                        <div class="flex"><dt class="w-[147px] text-[#6b778c]">Development Estimate<br>In Hours:</dt><dd>8</dd></div>
                        <div class="flex"><dt class="w-[147px] text-[#6b778c]">Project Category:</dt><dd>Digital Solutions</dd></div>
                      </dl>
                      <dl class="flex h-[43px] flex-col justify-between whitespace-nowrap">
                        <div class="flex"><dt class="w-[146px] text-[#6b778c]">Resolution:</dt><dd>Unresolved</dd></div>
                        <div class="flex"><dt class="w-[146px] text-[#6b778c]">Fix Version/s:</dt><dd>None</dd></div>
                      </dl>
                    </div>
                    <h3 class="mt-[29px] flex shrink-0 items-center gap-1.5 font-medium"><span class="flex h-[14px] w-3 items-center justify-center bg-[#f1f1f5]"><svg class="size-2"><use href="#chev"/></svg></span>Description</h3>
                    <p class="mt-1 shrink-0 pl-[18px] whitespace-nowrap text-[#1d2b4d]">As an Authenticated Customer, I want to get an introduction to the portal at the top of the Activity Center page<br>so that I understand what the portal is about and what value I can get there.</p>
                    <!-- attached mock-up thumbnail -->
                    <div class="relative mt-2 ml-[18px] h-[31px] w-[314px] shrink-0 overflow-hidden border-b-[3px] border-l border-b-[#3d5a94] border-l-[#ddd] text-[#444]">
                      <div class="flex items-center pt-[3px] pl-6 text-[9px] leading-3"><svg class="h-[11px] w-2 text-[#f0502a]"><use href="#bmc"/></svg><b>bmc</b><span class="ml-1.5 font-medium">Success Center</span><i class="ml-auto size-1.5 bg-[#555]"></i><i class="ml-3 size-1.5 rounded-full bg-[#e04a3a]"></i><i class="ml-3 h-2 w-1.5 bg-[#999]"></i><i class="mr-[26px] ml-2.5 size-2 rounded-full bg-[#444]"></i></div>
                      <div class="flex gap-[14px] pl-6 text-[7px] leading-[14px] text-[#777]"><span>Ordermation ˅</span><span>Subcategorie ˅</span><span>Subaccounts ˅</span></div>
                      <i class="absolute right-[23px] -bottom-1.5 size-[13px] rounded-full bg-[#f04a42]"></i>
                    </div>
                  </div>

                  <!-- Right column -->
                  <div class="w-[393px] shrink-0 whitespace-nowrap text-[#1d2b4d]">
                    <h3 class="flex items-center gap-[7px] font-medium"><span class="flex h-[14px] w-3 items-center justify-center bg-[#f1f1f5]"><svg class="size-2"><use href="#chev"/></svg></span>People</h3>
                    <dl class="pl-[19px]">
                      <div class="mt-2 flex h-6 items-center"><dt class="w-[137px] text-[#6b778c]">Assignee:</dt><dd class="flex items-center gap-1"><svg class="size-[22px]" viewBox="0 0 22 22"><circle cx="11" cy="11" r="9.500" fill="#f4f4fa" stroke="#c1c4ce" stroke-width="3"/><path d="M9 9q0-2 2-2t2 2q0 1-2 2v1.500M11 14v1.500" stroke="#42526e" stroke-width="1.500" fill="none"/></svg>Unassigned</dd></div>
                      <div class="flex h-6 items-center pl-[137px]"><dd><a href="#" class="text-[#0b57b8]">Assign to me</a></dd></div>
                      <div class="mt-1 flex h-6 items-center"><dt class="w-[137px] text-[#6b778c]">Reporter:</dt><dd class="flex items-center gap-1"><svg class="size-[22px]" viewBox="0 0 22 22"><circle cx="11" cy="11" r="9.500" fill="#f6fbfb" stroke="#4fc3c5" stroke-width="3"/><path d="M8.500 12h5q-.500 3-2.500 3t-2.500-3z" fill="#b0486a"/><circle cx="8" cy="10" r=".7" fill="#444"/><circle cx="14" cy="10" r=".7" fill="#444"/></svg>Nadolny, Rhett<svg class="ml-[3px] size-[13px]" viewBox="0 0 13 13"><circle cx="6.500" cy="6.500" r="6.500" fill="#0052cc"/><path d="M6.500 5.500v5M6.500 2.500v2" stroke="#fff" stroke-width="2"/></svg></dd></div>
                      <div class="mt-0.5 flex h-6 items-center"><dt class="w-[137px] text-[#6b778c]">Developer/s:</dt><dd>Pattima, Amrutha</dd></div>
                      <div class="flex h-6 items-center"><dt class="w-[137px] text-[#6b778c]">Votes:</dt><dd class="flex items-center gap-1"><span class="h-4 w-[22px] rounded-full bg-[#dfe1e8] text-center text-xs leading-4">0</span><a href="#" class="text-[#0b57b8]">Vote for this issue</a></dd></div>
                      <div class="flex h-6 items-center"><dt class="w-[137px] text-[#6b778c]">Watchers:</dt><dd class="flex items-center gap-1"><span class="h-4 w-[22px] rounded-full bg-[#dfe1e8] text-center text-xs leading-4">2</span><a href="#" class="text-[#0b57b8]">Start watching this issue</a></dd></div>
                    </dl>
                    <h3 class="mt-7 flex items-center gap-[7px] font-medium"><span class="flex h-[14px] w-3 items-center justify-center bg-[#f1f1f5]"><svg class="size-2"><use href="#chev"/></svg></span>Dates</h3>
                    <dl class="mt-1 pl-[19px]">
                      <div class="flex h-6 items-center"><dt class="w-[137px] text-[#6b778c]">Created:</dt><dd>Yesterday 4:33 PM</dd></div>
                      <div class="flex h-6 items-center"><dt class="w-[137px] text-[#6b778c]">Updated:</dt><dd>18 hours ago</dd></div>
                    </dl>
                    <h3 class="mt-7 flex items-center gap-[7px] font-medium"><span class="flex h-[14px] w-3 items-center justify-center bg-[#f1f1f5]"><svg class="size-2"><use href="#chev"/></svg></span>Time Tracking<button aria-label="Log work" class="mr-[37px] ml-auto"><svg class="size-3" viewBox="0 0 12 12"><path d="M6 0v12M0 6h12" stroke="#42526e" stroke-width="1.800"/></svg></button></h3>
                    <dl class="pl-[19px]">
                      <div class="flex h-8 items-center"><dt class="w-[131px] text-[#6b778c]">Estimated:</dt><dd class="flex items-center gap-[5px]"><span class="h-[9px] w-[104px] bg-[#89acd6]"></span>1d</dd></div>
                      <div class="flex h-8 items-center"><dt class="w-[131px] text-[#6b778c]">Remaining:</dt><dd class="flex items-center gap-[5px]"><span class="h-[11px] w-[104px] bg-[#ec8e00]"></span>1d</dd></div>
                      <div class="flex h-8 items-center"><dt class="w-[131px] text-[#6b778c]">Logged:</dt><dd class="flex items-center gap-[5px]"><span class="h-[9px] w-[104px] bg-[#c9c9cc]"></span>Not Specified</dd></div>
                    </dl>
                    <h3 class="mt-6 flex items-center gap-[7px] font-medium"><span class="flex h-[14px] w-3 items-center justify-center bg-[#f1f1f5]"><svg class="size-2"><use href="#chev"/></svg></span>Development</h3>
                  </div>
                </div>
              </article>
              <div class="-ml-[18px] flex w-[18px] shrink-0 flex-col items-center pt-[9px] pb-[9px]">
                <svg class="h-[10px] w-3" viewBox="0 0 12 10"><path d="M6 0l6 10H0z" fill="#8a8a8a"/></svg>
                <div class="mt-[9px] h-[114px] w-[11px] rounded-full bg-[#8a8a8a]"></div>
                <svg class="mt-auto h-[10px] w-3" viewBox="0 0 12 10"><path d="M6 10l6-10H0z" fill="#8a8a8a"/></svg>
              </div>
            </div>
          </div>
        </div>
      </div>

      <!-- Edge sidebar -->
      <div class="flex w-[50px] shrink-0 flex-col items-center pt-4 pl-1.5 text-[#222]">
        <svg class="size-[22px]" viewBox="0 0 22 22"><circle cx="8.500" cy="8.500" r="6.500" fill="#eef3f8" stroke="#6f6f78" stroke-width="2.200"/><path d="M13.500 13.500l6.500 6.500" stroke="#8a4fd0" stroke-width="3.500"/></svg>
        <svg class="mt-[29px] size-[22px]" viewBox="0 0 22 22"><path d="M11 1l9 5v7l-5 3V8l-6-3z" fill="#3f8be8"/><path d="M11 1L2 6v9l5 3V9l6-4z" fill="#8a63d8"/><path d="M2 15l9 6 9-6v-3l-9 4-4-2z" fill="#7450c8"/><circle cx="11" cy="11" r="3.500" fill="#fff"/></svg>
        <svg class="mt-[29px] size-[22px]" viewBox="0 0 22 22"><rect x="6" y="1" width="15" height="12" fill="#28a8ea"/><path d="M5 10l9 5 8-5v11H5z" fill="#0f78d4"/><rect y="5" width="13" height="13" rx="1" fill="#0a64b8"/><circle cx="6.500" cy="11.500" r="3" fill="none" stroke="#fff" stroke-width="1.800"/></svg>
        <svg class="mt-[29px] size-[22px]"><use href="#teams"/></svg>
        <hr class="mt-7 w-[35px] border-[#cfcdd2]">
        <svg class="mt-8 size-4"><use href="#plus"/></svg>
        <hr class="mt-auto w-[35px] border-[#cfcdd2]">
        <svg class="mt-[17px] mb-[17px] size-[22px]"><use href="#gear"/></svg>
      </div>
    </div>
  </div>

  <!-- Remote taskbar -->
  <div class="flex h-[61px] shrink-0 items-center border-t border-b border-t-[#bdbbc0] border-b-white bg-[#efeef1] pb-[2px] text-[#222]">
    <div class="flex w-[275px] shrink-0 pl-[25px]"><div class="relative pb-1"><svg class="mt-1.5 h-[26px] w-7" viewBox="0 0 28 26"><circle cx="15" cy="13" r="13" fill="#f39a1f"/><path d="M4 9h14M2 14h20M0 19h16M4 23h16" stroke="#fbe9b8" stroke-width="1.800"/><path d="M19 11l9 2" stroke="#e0620c" stroke-width="2"/></svg><span class="absolute -top-1 -right-1.5 flex size-5 items-center justify-center rounded-full bg-[#c42b1c] text-[13px] text-white">1</span></div></div>
    <svg class="size-[30px] shrink-0"><use href="#win"/></svg>
    <label class="ml-4 flex h-10 w-[275px] shrink-0 items-center rounded-full border border-[#dcdadf] bg-[#fbfbfc] pr-1 pl-[14px]"><svg class="size-[19px] shrink-0"><use href="#mag"/></svg><input aria-label="Search" placeholder="Search" class="ml-3 w-0 flex-1 bg-transparent text-base placeholder-[#5c5c5c] outline-none"><span class="flex h-8 w-[63px] items-center justify-center rounded-full bg-[#e3e1e5] text-sm text-[#f08a72]">my<b class="text-[#444]">bmc</b></span></label>
    <div class="ml-[9px] flex w-[711px] shrink-0 items-center justify-between">
      <button class="relative flex h-[52px] w-12 items-center justify-center pb-1"><svg class="size-[30px]"><use href="#tview"/></svg></button>
      <button class="relative flex h-[52px] w-12 items-center justify-center rounded bg-[#fce4e6] pb-1"><svg class="h-[30px] w-9"><use href="#outlook"/></svg><i class="absolute bottom-0 h-1 w-2 rounded-full bg-[#c42b1c]"></i></button>
      <button class="relative flex h-[52px] w-12 items-center justify-center pb-1"><svg class="size-[30px]"><use href="#teams"/></svg></button>
      <button class="relative flex h-[52px] w-12 items-center justify-center pb-1"><svg class="size-[30px]"><use href="#folder"/></svg><i class="absolute bottom-0 h-1 w-2 rounded-full bg-[#8a8a8a]"></i></button>
      <button class="relative flex h-[52px] w-12 items-center justify-center rounded border border-[#e0dfe3] bg-[#fbfafc] pb-1"><svg class="size-[30px]"><use href="#edge"/></svg><svg class="absolute bottom-[9px] left-2 h-3 w-[17px]" viewBox="0 0 17 12"><path d="M5 3V0h7v3" fill="none" stroke="#7a4010" stroke-width="1.500"/><rect y="2" width="17" height="10" rx="1" fill="#b4691a"/><path d="M0 7h17" stroke="#e8a23c"/></svg><i class="absolute bottom-0 h-1 w-5 rounded-full bg-[#0a6cd0]"></i></button>
      <button class="relative flex h-[52px] w-12 items-center justify-center pb-1"><svg class="size-[30px]"><use href="#postman"/></svg><i class="absolute bottom-0 h-1 w-2 rounded-full bg-[#8a8a8a]"></i></button>
      <button class="relative flex h-[52px] w-12 items-center justify-center pb-1"><svg class="h-6 w-[30px]"><use href="#term"/></svg><i class="absolute bottom-0 h-1 w-2 rounded-full bg-[#8a8a8a]"></i></button>
      <button class="relative flex h-[52px] w-12 items-center justify-center pb-1"><svg class="size-[30px]"><use href="#nppf"/></svg><i class="absolute bottom-0 h-1 w-2 rounded-full bg-[#8a8a8a]"></i></button>
      <button class="relative flex h-[52px] w-12 items-center justify-center pb-1"><svg class="size-[30px]"><use href="#chrome"/></svg><i class="absolute bottom-0 h-1 w-2 rounded-full bg-[#8a8a8a]"></i></button>
      <button class="relative flex h-[52px] w-12 items-center justify-center rounded bg-[#fce4e6] pb-1"><svg class="size-7"><use href="#photos"/></svg><i class="absolute bottom-0 h-1 w-2 rounded-full bg-[#c42b1c]"></i></button>
      <button class="relative flex h-[52px] w-12 items-center justify-center pb-1"><svg class="size-[30px]"><use href="#git"/></svg><i class="absolute bottom-0 h-1 w-2 rounded-full bg-[#8a8a8a]"></i></button>
      <button class="relative flex h-[52px] w-12 items-center justify-center pb-1"><svg class="size-[30px]"><use href="#vsc"/></svg><i class="absolute bottom-0 h-1 w-2 rounded-full bg-[#8a8a8a]"></i></button>
      <button class="relative flex h-[52px] w-12 items-center justify-center pb-1"><span class="flex size-[30px] items-center justify-center rounded-xl bg-[#0b5cff] font-[Inter,sans-serif] text-[15px] font-bold text-white">zm</span><i class="absolute bottom-0 h-1 w-2 rounded-full bg-[#8a8a8a]"></i></button>
    </div>
    <div class="ml-auto flex items-center pr-[26px]">
      <svg class="h-3 w-[14px] rotate-180" viewBox="0 0 14 12"><path d="M1 3l6 6 6-6" fill="none" stroke="#222" stroke-width="1.600"/></svg>
      <div class="relative ml-[23px]"><svg class="h-4 w-[21px]"><use href="#cloud"/></svg><svg class="absolute top-0 left-0 h-4 w-[21px]" viewBox="0 0 21 16"><path d="M2 0l17 16" stroke="#222" stroke-width="1.800"/></svg></div>
      <svg class="ml-[22px] h-[22px] w-4"><use href="#mic"/></svg>
      <svg class="ml-[22px] h-5 w-[22px]" viewBox="0 0 22 20" fill="none" stroke="#222" stroke-width="1.500"><path d="M13 1H3Q1 1 1 3v10q0 2 2 2h13M5 19h10M10 15v4"/><rect x="17" y="1" width="4" height="7" rx="1"/><path d="M19 8v11"/></svg>
      <svg class="ml-2 h-4 w-5" viewBox="0 0 20 16" fill="none" stroke="#222" stroke-width="1.300"><path d="M1 5.500h3L9 1.500v13l-5-4H1zM13 5.500l5 5M18 5.500l-5 5"/></svg>
      <div class="w-[90px] pb-px text-right text-[15px] leading-5 whitespace-nowrap">6:56 PM<br>8/13/2024</div>
      <svg class="ml-[11px] h-5 w-[18px]"><use href="#bell"/></svg>
    </div>
  </div>
</main>

<!-- Local taskbar -->
<footer class="flex h-[60px] shrink-0 items-center border-t border-[#b5b9b5] bg-[linear-gradient(to_right,#e3ebea,#dfeee6_8%,#d4f3d9_13%,#e2efdd_18%,#d3f3e3_26%,#dcf2c2_38%,#e4efcc_44%,#d3f3d4_55%,#cff4e6_75%,#d4efe6_86%,#eadfd6_94%,#eedcd2)] text-[#1a1a1a]">
  <div class="flex w-[378px] shrink-0 items-center pl-[27px]">
    <svg class="h-[27px] w-7" viewBox="0 0 28 27"><circle cx="13" cy="13" r="12.500" fill="url(#gSun)"/><path d="M13 21a4 4 0 0 1 0-7 5 5 0 0 1 9 0 3.700 3.700 0 0 1 2 7z" fill="#b9cdf5" stroke="#8fabe6"/></svg>
    <div class="ml-[9px] pb-[3px] text-[15px] leading-5 whitespace-nowrap">30°C<br><span class="text-[#5a5f5c]">Mostly sunny</span></div>
  </div>
  <svg class="size-[29px] shrink-0"><use href="#win"/></svg>
  <label class="ml-[18px] flex h-[39px] w-[273px] shrink-0 items-center rounded-full border border-[#b7cfb7] bg-[#f4fbf2] pr-2 pl-[14px]"><svg class="size-[18px] shrink-0"><use href="#mag"/></svg><input aria-label="Search Windows" placeholder="Search" class="ml-3 w-0 flex-1 bg-transparent text-base placeholder-[#454545] outline-none"><svg class="h-[30px] w-[57px]" viewBox="0 0 57 30"><path d="M4 29q8-7 9-14 2-11 11-13l11 3 6 4-4 9-9 2q-6 4-7 10z" fill="#bd8058"/><path d="M20 4q8-6 14 0l2 5-4 8-8-2z" fill="#dba37e"/><path d="M0 8l42 1" stroke="#f0a52c" stroke-width="3"/><path d="M0 8h6" stroke="#e0506a" stroke-width="3"/><path d="M27 5l4 6M32 5l3 5" stroke="#a5683f"/><path d="M44 9q6 3 2 7t6 1-2 7 5 1" fill="none" stroke="#444"/></svg></label>
  <div class="ml-1.5 flex w-[764px] shrink-0 items-center justify-between">
    <button class="relative flex h-12 w-12 items-center justify-center"><svg class="size-[29px]"><use href="#tview"/></svg></button>
    <button class="relative flex h-12 w-12 items-center justify-center"><svg class="size-[30px]" viewBox="0 0 30 30"><path d="M7 0h9q3 0 4 4l1 4h-4q-4 0-5 4l-3 9q-1 2-4 2-6 0-4-8L4 3q1-3 3-3z" fill="url(#gCop)"/><path d="M23 30h-9q-3 0-4-4l-1-4h4q4 0 5-4l3-9q1-2 4-2 6 0 4 8l-3 12q-1 3-3 3z" fill="url(#gCop2)"/></svg></button>
    <button class="relative flex h-12 w-12 items-center justify-center"><svg class="size-[30px]"><use href="#teams"/></svg></button>
    <button class="relative flex h-12 w-12 items-center justify-center"><svg class="size-[30px]"><use href="#folder"/></svg><i class="absolute bottom-0 h-1 w-2 rounded-full bg-[#7c8a7c]"></i></button>
    <button class="relative flex h-12 w-12 items-center justify-center"><svg class="size-[30px]"><use href="#edge"/></svg></button>
    <button class="relative flex h-12 w-12 items-center justify-center"><svg class="size-[30px]"><use href="#chrome"/></svg><span class="absolute top-0 right-0.5 flex size-5 items-center justify-center rounded-full bg-[#689f38] font-[Roboto,sans-serif] text-xs text-white">N</span><i class="absolute bottom-0 h-1 w-2 rounded-full bg-[#7c8a7c]"></i></button>
    <button class="relative flex h-12 w-12 items-center justify-center"><svg class="size-[30px]"><use href="#chrome"/></svg><span class="absolute top-0 right-0.5 flex size-5 items-center justify-center rounded-full bg-[#00897b] font-[Roboto,sans-serif] text-xs text-white">M</span><i class="absolute bottom-0 h-1 w-2 rounded-full bg-[#7c8a7c]"></i></button>
    <button class="relative flex h-12 w-12 items-center justify-center"><svg class="h-6 w-[30px]"><use href="#term"/></svg><i class="absolute bottom-0 h-1 w-2 rounded-full bg-[#7c8a7c]"></i></button>
    <button class="relative flex h-12 w-12 items-center justify-center"><svg class="size-[30px]"><use href="#vsc"/></svg><i class="absolute bottom-0 h-1 w-2 rounded-full bg-[#7c8a7c]"></i></button>
    <button class="relative flex h-12 w-12 items-center justify-center"><svg class="size-[26px]"><use href="#photos"/></svg><i class="absolute bottom-0 h-1 w-2 rounded-full bg-[#7c8a7c]"></i></button>
    <button class="relative flex h-12 w-12 items-center justify-center"><svg class="size-[30px]"><use href="#chrome"/></svg><span class="absolute top-0 right-0.5 flex size-5 items-center justify-center rounded-full bg-[#bf360c] font-[Roboto,sans-serif] text-xs text-white">v</span><i class="absolute bottom-0 h-1 w-2 rounded-full bg-[#7c8a7c]"></i></button>
    <button class="relative flex h-12 w-12 items-center justify-center"><svg class="size-[28px]"><use href="#npp"/></svg><i class="absolute bottom-0 h-1 w-2 rounded-full bg-[#7c8a7c]"></i></button>
    <button class="relative flex h-12 w-12 items-center justify-center"><svg class="size-[30px]" viewBox="0 0 30 30"><path d="M2 28l2-7A13 13 0 1 1 9 26z" fill="none" stroke="#138a4c" stroke-width="3"/><path d="M10 8q-2 2-1 5 3 7 9 9 4 0 4-4l-4-2-2 2q-3-1-5-5l1.500-2L11 8z" fill="#138a4c"/></svg><i class="absolute bottom-0 h-1 w-2 rounded-full bg-[#7c8a7c]"></i></button>
    <button class="relative flex h-12 w-12 items-center justify-center rounded bg-[#e6f8f2]"><span class="flex size-[30px] items-center justify-center rounded-xl bg-[#0b5cff] font-[Inter,sans-serif] text-[9px] font-semibold text-white">zoom</span><i class="absolute bottom-0 h-1 w-5 rounded-full bg-[#0a6cd0]"></i></button>
  </div>
  <div class="ml-auto flex items-center pr-[26px]">
    <svg class="h-[15px] w-5"><use href="#cloud"/></svg>
    <svg class="ml-[22px] h-[21px] w-4"><use href="#mic"/></svg>
    <div class="ml-[22px] w-[35px] pb-px text-center text-[15px] leading-5">ENG<br>IN</div>
    <svg class="ml-[19px] h-4 w-5" viewBox="0 0 20 16" fill="none" stroke="#1a1a1a" stroke-width="1.500"><path d="M1 5.500Q10-2.500 19 5.500M3.500 8.500Q10 2.500 16.500 8.500M6.500 11.500q3.500-3.500 7 0"/><circle cx="10" cy="14" r="1.500" fill="#1a1a1a" stroke="none"/></svg>
    <svg class="ml-[10px] h-4 w-5" viewBox="0 0 20 16" fill="none" stroke="#1a1a1a" stroke-width="1.300"><path d="M1 5.500h3L8.500 1.500v13L4 10.500H1zM11 5.500q2 2.500 0 5M13.500 3.500q3.500 4.500 0 9"/><path d="M16 1.500q4.500 6.500 0 13" stroke="#999"/></svg>
    <svg class="ml-[10px] h-[14px] w-5" viewBox="0 0 20 14"><rect x="1" y="1" width="16" height="12" rx="2.500" fill="none" stroke="#1a1a1a" stroke-width="1.400"/><rect x="3" y="3" width="10" height="8" rx="1" fill="#1a1a1a"/><path d="M18 5h1.500v4H18z" fill="#1a1a1a"/></svg>
    <div class="ml-[10px] w-[88px] pb-[3px] text-right text-[15px] leading-5 whitespace-nowrap">18:56<br>13-08-2024</div>
    <svg class="ml-[10px] h-5 w-[18px]"><use href="#bell"/></svg>
  </div>
</footer>
</body>
</html>
